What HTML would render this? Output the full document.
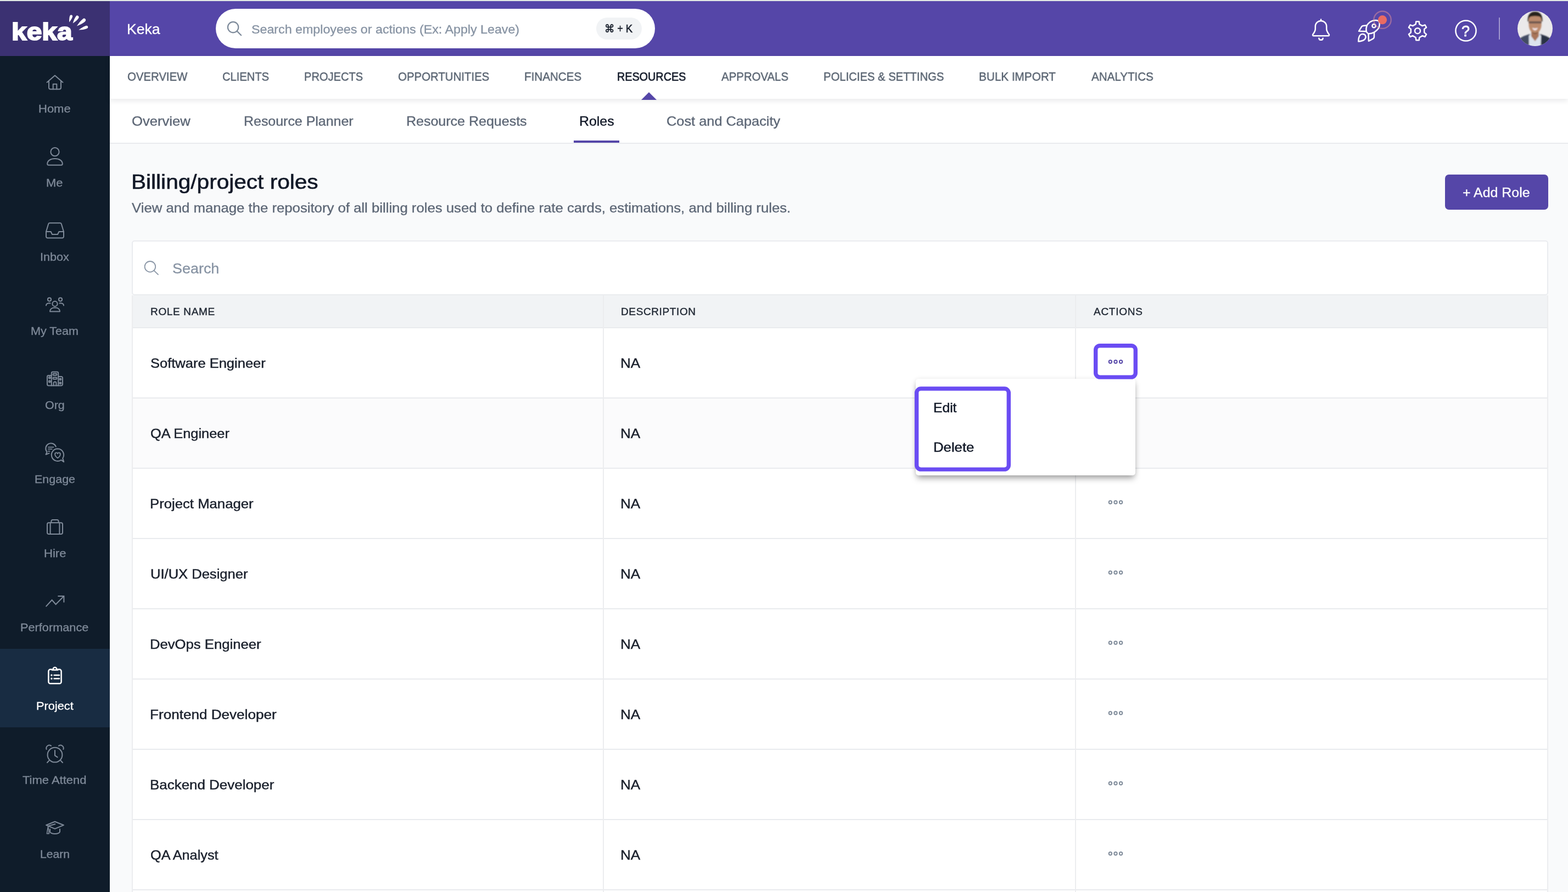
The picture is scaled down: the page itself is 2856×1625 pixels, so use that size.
<!DOCTYPE html>
<html lang="en">
<head>
<meta charset="utf-8">
<title>Keka - Billing/project roles</title>
<style>
html,body{margin:0;padding:0;}
body{width:2856px;height:1625px;overflow:hidden;position:relative;background:#f9fafb;font-family:"Liberation Sans","DejaVu Sans",sans-serif;}
.a{position:absolute;}
.t{position:absolute;white-space:nowrap;line-height:1;will-change:transform;transform-origin:0 0;}
svg{position:absolute;overflow:visible;}
</style>
</head>
<body>
<!-- top strip -->
<div class="a" style="left:0;top:0;width:2856px;height:1px;background:#dde5e2;"></div>
<div class="a" style="left:0;top:1px;width:2856px;height:1px;background:#e8f0e8;"></div>
<!-- logo block + header -->
<div class="a" style="left:0;top:2px;width:200px;height:100px;background:#3b3172;"></div>
<div class="a" style="left:200px;top:2px;width:2656px;height:100px;background:#5546a8;"></div>
<!-- sidebar -->
<div class="a" style="left:0;top:102px;width:200px;height:1523px;background:#0f1c2a;"></div>
<div class="a" style="left:0;top:1182px;width:200px;height:143px;background:#182c42;"></div>
<!-- sub tabs -->
<div class="a" style="left:200px;top:180px;width:2656px;height:80px;background:#fff;border-bottom:2px solid #e9ebee;"></div>
<div class="a" style="left:1045px;top:256px;width:83px;height:4px;background:#5546a8;"></div>
<!-- nav -->
<div class="a" style="left:200px;top:102px;width:2656px;height:78px;background:#fff;box-shadow:0 3px 10px rgba(20,30,40,0.10);"></div>
<svg style="left:1168px;top:168px;" width="28" height="14" viewBox="0 0 28 14"><path d="M0 14 L14 0 L28 14 Z" fill="#5546a8"/></svg>
<!-- header search pill -->
<div class="a" style="left:393px;top:16px;width:800px;height:72px;border-radius:36px;background:#fff;"></div>
<div class="a" style="left:1086px;top:32px;width:83px;height:40px;border-radius:20px;background:#f1f3f5;"></div>
<!-- header right -->
<div class="a" style="left:2730px;top:32px;width:2px;height:40px;background:rgba(255,255,255,0.45);"></div>
<!-- add role -->
<div class="a" style="left:2632px;top:318px;width:188px;height:64px;border-radius:7px;background:#5546a8;"></div>
<!-- search card -->
<div class="a" style="left:240px;top:438px;width:2580px;height:100px;box-sizing:border-box;border:2px solid #eaecef;border-radius:5px;background:#fff;"></div>
<!-- table -->
<div class="a" style="left:240px;top:538px;width:2580px;height:1087px;background:#fff;"></div>
<div class="a" style="left:240px;top:538px;width:2580px;height:58px;background:#f1f3f5;"></div>
<div class="a" style="left:242px;top:726px;width:2576px;height:126px;background:#fbfbfc;"></div>
<!-- row borders -->
<div class="a" style="left:240px;top:596px;width:2580px;height:2px;background:#e9ebee;"></div>
<div class="a" style="left:240px;top:724px;width:2580px;height:2px;background:#e9ebee;"></div>
<div class="a" style="left:240px;top:852px;width:2580px;height:2px;background:#e9ebee;"></div>
<div class="a" style="left:240px;top:980px;width:2580px;height:2px;background:#e9ebee;"></div>
<div class="a" style="left:240px;top:1108px;width:2580px;height:2px;background:#e9ebee;"></div>
<div class="a" style="left:240px;top:1236px;width:2580px;height:2px;background:#e9ebee;"></div>
<div class="a" style="left:240px;top:1364px;width:2580px;height:2px;background:#e9ebee;"></div>
<div class="a" style="left:240px;top:1492px;width:2580px;height:2px;background:#e9ebee;"></div>
<div class="a" style="left:240px;top:1620px;width:2580px;height:2px;background:#e9ebee;"></div>
<!-- vertical borders -->
<div class="a" style="left:240px;top:538px;width:2px;height:1087px;background:#ecedef;"></div>
<div class="a" style="left:1098px;top:538px;width:2px;height:1087px;background:#ecedef;"></div>
<div class="a" style="left:1958px;top:538px;width:2px;height:1087px;background:#ecedef;"></div>
<div class="a" style="left:2818px;top:538px;width:2px;height:1087px;background:#ecedef;"></div>
<!-- action button highlight -->
<!-- dropdown -->
<div class="a" style="left:1668px;top:690px;width:400px;height:176px;background:#fff;border-radius:5px;box-shadow:0 7px 12px -2px rgba(0,0,0,0.36),0 0 9px rgba(0,0,0,0.07);"></div>
<svg style="left:0;top:0;" width="2856" height="1625" viewBox="0 0 2856 1625" fill="none" stroke-linecap="round" stroke-linejoin="round">
<path transform="translate(126.1 40.6) rotate(-72.1)" d="M0 0 C4.19 -1.50 7.69 -2.50 11.18 -2.50 C13.28 -2.50 13.98 -1.38 13.98 0 C13.98 1.38 13.28 2.50 11.18 2.50 C7.69 2.50 4.19 1.50 0 0 Z" fill="#fff"/>
<path transform="translate(132.7 42.4) rotate(-54.1)" d="M0 0 C4.96 -1.74 9.10 -2.90 13.23 -2.90 C15.72 -2.90 16.54 -1.59 16.54 0 C16.54 1.59 15.72 2.90 13.23 2.90 C9.10 2.90 4.96 1.74 0 0 Z" fill="#fff"/>
<path transform="translate(139.8 47.6) rotate(-39.4)" d="M0 0 C6.10 -1.86 11.18 -3.10 16.26 -3.10 C19.30 -3.10 20.32 -1.71 20.32 0 C20.32 1.71 19.30 3.10 16.26 3.10 C11.18 3.10 6.10 1.86 0 0 Z" fill="#fff"/>
<path transform="translate(143.3 54.6) rotate(-20.0)" d="M0 0 C5.36 -1.62 9.83 -2.70 14.30 -2.70 C16.98 -2.70 17.87 -1.49 17.87 0 C17.87 1.49 16.98 2.70 14.30 2.70 C9.83 2.70 5.36 1.62 0 0 Z" fill="#fff"/>
<g stroke="#7f8a99" stroke-width="2">
<path d="M85.6 150 L100 137.6 L114.4 150"/><path d="M89 147.3 V159.6 a3 3 0 0 0 3 3 H108 a3 3 0 0 0 3 -3 V147.3"/><path d="M96.7 162.4 V153.2 H103.3 V162.4"/>
<circle cx="100" cy="276.7" r="7.6"/><path d="M86.2 298.6 C86.2 292.6 92 289 100 289 S113.8 292.6 113.8 298.6 Q113.8 300.7 111.8 300.7 H88.2 Q86.2 300.7 86.2 298.6 Z"/>
<path d="M84 422 L88.2 408 Q88.8 406.3 90.6 406.3 H109.4 Q111.2 406.3 111.8 408 L116 422 V431 a2.5 2.5 0 0 1 -2.5 2.5 H86.5 a2.5 2.5 0 0 1 -2.5 -2.5 Z"/><path d="M84 422 H92.6 L95 427 H105 L107.4 422 H116"/>
<circle cx="100" cy="553.4" r="4.6"/><path d="M91 567.4 C91 563.2 94.6 560.6 100 560.6 S109 563.2 109 567.4 Z"/>
<circle cx="90" cy="545.6" r="3.1"/><circle cx="110" cy="545.6" r="3.1"/>
<path d="M84 556.4 C84 553.6 86.6 552 91.6 552.4"/><path d="M116 556.4 C116 553.6 113.4 552 108.4 552.4"/>
<path d="M93.8 702.4 V680 a2.4 2.4 0 0 1 2.4 -2.4 H103.8 a2.4 2.4 0 0 1 2.4 2.4 V702.4"/>
<path d="M93.8 684 H88.4 a2.4 2.4 0 0 0 -2.4 2.4 V700 a2.4 2.4 0 0 0 2.4 2.4 H111.6 a2.4 2.4 0 0 0 2.4 -2.4 V688.4 a2.4 2.4 0 0 0 -2.4 -2.4 H106.2"/>
<rect x="96.6" y="680.4" width="6.8" height="3.4" rx="1"/><rect x="96.6" y="687.4" width="6.8" height="3.4" rx="1"/>
<rect x="89" y="686.6" width="2.8" height="2.8" rx=".6"/><rect x="89" y="693.6" width="2.8" height="2.8" rx=".6"/><rect x="108.4" y="689.4" width="2.8" height="2.8" rx=".6"/><rect x="108.4" y="696.4" width="2.8" height="2.8" rx=".6"/>
<path d="M97.6 702.4 V698 a2.4 2.4 0 0 1 4.8 0 V702.4"/>
<path d="M101.8 813.6 A9.6 9.6 0 1 0 85.6 823.4 L83.6 828 L89.6 825.6"/>
<path d="M88 814.6 H97.4 M88 818.2 H94.6 M88 821.8 H90.6" stroke-width="1.8"/>
<path d="M105 817.6 A11.2 11.2 0 1 0 111.4 838 L116.2 841.4 L114.2 835 A11.2 11.2 0 0 0 105 817.6 Z"/>
<path d="M105 834.4 C101.4 832 100.2 829.6 100.2 827.8 A2.4 2.4 0 0 1 105 826.6 A2.4 2.4 0 0 1 109.8 827.8 C109.8 829.6 108.6 832 105 834.4 Z" stroke-width="1.8"/>
<rect x="86" y="952.2" width="28" height="20.8" rx="3"/><path d="M93.4 952 V949.4 a2.4 2.4 0 0 1 2.4 -2.4 H104.2 a2.4 2.4 0 0 1 2.4 2.4 V952"/><path d="M91.6 952.4 V972.8 M108.4 952.4 V972.8"/>
<path d="M84.2 1104.4 L94.6 1093 L101.6 1101 L116 1086.4" stroke-linejoin="miter"/><path d="M105.4 1086 H116.4 V1097.4" stroke-linejoin="miter" stroke-linecap="butt"/>
<circle cx="100" cy="1375.2" r="13.4"/><path d="M100 1367 V1376.4 L104.6 1379.4"/>
<path d="M84.6 1365 A5.6 5.6 0 0 1 93 1358.6"/><path d="M115.4 1365 A5.6 5.6 0 0 0 107 1358.6"/>
<path d="M89.6 1385.4 L86 1389.2 M110.4 1385.4 L114 1389.2"/>
<path d="M100 1496.8 L116 1503.2 L100 1509.8 L84 1503.2 Z"/><path d="M88.4 1504.6 L100.4 1501.2"/><path d="M87.6 1505.4 L85.4 1518.6 H89.4 Z" stroke-width="1.6"/>
<path d="M91 1510.6 V1515 C91 1517.2 95 1519 100 1519 S109 1517.2 109 1515 V1510.6"/>
</g>
<g stroke="#fff" stroke-width="2.5">
<path d="M94.6 1219.6 H91.6 a3.2 3.2 0 0 0 -3.2 3.2 V1242 a3.2 3.2 0 0 0 3.2 3.2 H108.4 a3.2 3.2 0 0 0 3.2 -3.2 V1222.800 a3.2 3.2 0 0 0 -3.2 -3.2 H105.4"/>
<path d="M94.8 1220.6 H105.2"/><path d="M96.8 1219.8 A3.3 3.3 0 1 1 103.2 1219.8"/>
<path d="M98.6 1230 H108 M98.6 1236.2 H108"/><path d="M93.9 1230 h0.01 M93.9 1236.2 h0.01" stroke-width="3.4"/>
</g>
<g stroke="#7d8a9a" stroke-width="2.2"><circle cx="424.6" cy="49.6" r="9.7"/><path d="M431.6 56.6 L439.2 64.2"/></g>
<g stroke="#8a96a6" stroke-width="1.8"><circle cx="273.4" cy="485.8" r="9.8"/><path d="M280.4 492.8 L288 500.2"/></g>
<g stroke="#fff" stroke-width="2.5">
<path d="M2406 34.4 V37.9" stroke-linecap="butt"/>
<path d="M2395.8 52.5 V48.1 A10.2 10.2 0 0 1 2416.2 48.1 V52.5 C2416.2 57 2418.5 59.5 2420.6 62.4 C2421.6 63.8 2420.8 65.2 2419.2 65.2 H2392.8 C2391.2 65.2 2390.4 63.8 2391.4 62.4 C2393.5 59.5 2395.8 57 2395.8 52.5 Z"/>
<path d="M2402.3 69.7 A3.75 3.75 0 0 0 2409.7 69.7"/>
<path d="M2489.8 46.1 C2491.5 43.5 2493 42 2495.2 40.3 C2498.5 37.9 2503 36.7 2506.4 37 C2509 37.2 2510.5 37.6 2511.2 38.6 C2512.4 40 2512.9 41.2 2512.7 42.6 C2512.7 45 2512.5 47.5 2511.8 49.5 C2510.7 52 2509.6 53.4 2508.3 54.5 C2506.5 56.2 2505 57.6 2502.9 58.8 C2500 60.4 2496 61.4 2492.5 61.5 C2490.5 60.5 2489.2 59 2488.7 57.2 C2488 54 2488.6 49.5 2489.8 46.1 Z"/>
<circle cx="2502.5" cy="47.2" r="3.1"/>
<path d="M2489.8 46.2 L2482.6 47.1 Q2480.8 47.4 2479.9 48.9 L2475 56.8 L2488.6 57.3"/>
<path d="M2492.5 61.6 L2492.9 74.8 L2500.8 70.6 Q2502.8 69.5 2502.9 67.4 L2503 59"/>
<path d="M2474.3 75.4 C2474.3 71 2475 66.5 2477.5 63.8 C2479 62.3 2480.6 61.9 2482.2 62 C2484.8 62.2 2486.4 63.4 2487 64.9 C2487.6 66.2 2487.7 67.2 2487.500 68.4 C2487 70.2 2486 71.6 2484.5 72.6 C2482 74.3 2478.6 75.2 2474.3 75.4 Z"/>
<path d="M2578.6 44.1 L2579.3 39.2 L2584.7 39.2 L2585.4 44.1 L2590.8 47.2 L2595.4 45.4 L2598.1 50.0 L2594.2 53.1 L2594.2 59.3 L2598.1 62.4 L2595.4 67.0 L2590.8 65.2 L2585.4 68.3 L2584.7 73.2 L2579.3 73.2 L2578.6 68.3 L2573.2 65.2 L2568.6 67.0 L2565.9 62.4 L2569.8 59.3 L2569.8 53.1 L2565.9 50.0 L2568.6 45.4 L2573.2 47.2 Z" stroke-linejoin="round"/>
<circle cx="2582" cy="56.2" r="5"/>
<circle cx="2670" cy="56" r="18.6"/>
</g>
<circle cx="2518" cy="36.2" r="15.7" stroke="rgba(240,150,150,0.46)" stroke-width="2.3"/><circle cx="2518" cy="36.2" r="8.1" fill="#e96b63"/>
<rect x="1995.70" y="629.70" width="72.60" height="57.40" rx="7.80" stroke="#6a4cf3" stroke-width="7.4"/>
<rect x="1669.60" y="708.00" width="167.70" height="147.10" rx="7.80" stroke="#6a4cf3" stroke-width="7.4"/>
<g stroke="#5546a8" stroke-width="1.9"><circle cx="2022.4" cy="659" r="2.7"/><circle cx="2032" cy="659" r="2.7"/><circle cx="2041.600" cy="659" r="2.7"/></g>
<g stroke="#7e8a99" stroke-width="1.9"><circle cx="2022.4" cy="915" r="2.7"/><circle cx="2032" cy="915" r="2.7"/><circle cx="2041.600" cy="915" r="2.7"/></g>
<g stroke="#7e8a99" stroke-width="1.9"><circle cx="2022.4" cy="1043" r="2.7"/><circle cx="2032" cy="1043" r="2.7"/><circle cx="2041.600" cy="1043" r="2.7"/></g>
<g stroke="#7e8a99" stroke-width="1.9"><circle cx="2022.4" cy="1171" r="2.7"/><circle cx="2032" cy="1171" r="2.7"/><circle cx="2041.600" cy="1171" r="2.7"/></g>
<g stroke="#7e8a99" stroke-width="1.9"><circle cx="2022.4" cy="1299" r="2.7"/><circle cx="2032" cy="1299" r="2.7"/><circle cx="2041.600" cy="1299" r="2.7"/></g>
<g stroke="#7e8a99" stroke-width="1.9"><circle cx="2022.4" cy="1427" r="2.7"/><circle cx="2032" cy="1427" r="2.7"/><circle cx="2041.600" cy="1427" r="2.7"/></g>
<g stroke="#7e8a99" stroke-width="1.9"><circle cx="2022.4" cy="1555" r="2.7"/><circle cx="2032" cy="1555" r="2.7"/><circle cx="2041.600" cy="1555" r="2.7"/></g>
</svg>
<svg style="left:2764px;top:20px;" width="64" height="64" viewBox="0 0 64 64">
<defs><clipPath id="avc"><circle cx="32" cy="32" r="32"/></clipPath><filter id="avb" x="-10%" y="-10%" width="120%" height="120%"><feGaussianBlur stdDeviation="0.9"/></filter></defs>
<g clip-path="url(#avc)"><rect width="64" height="64" fill="#ebe9ea"/>
<g filter="url(#avb)">
<path d="M0 64 L4 50 Q12 45 21 42.500 L43 42.500 Q52 45 60 50 L64 64 Z" fill="#2c3145"/>
<path d="M4 50 Q12 45 21 42.500 L21 64 L0 64 Z" fill="#434b63"/>
<path d="M20.600 45 L25.500 41 L38.500 41 L43 45 L42.500 64 L21 64 Z" fill="#dde3ee"/>
<path d="M25.200 38 L38.600 38 L38.800 46 L32 55 L25 46 Z" fill="#a9755a"/>
<path d="M20.400 13 Q20.400 6 32 6 Q43.800 6 43.800 13 L43.600 27 Q42.500 36 36 40 Q32 42 28 40 Q21.500 36 20.600 27 Z" fill="#bd8b6d"/>
<path d="M26 37.500 Q32 42.500 38 37.500 Q36 41.500 32 41.800 Q28 41.500 26 37.500 Z" fill="#6e4a3a"/>
<path d="M18.600 19 Q17.800 1.500 32 1.200 Q46.200 1.500 45.400 19 L43.800 19 Q44 11.500 40 10.200 Q32 8.200 24 10.200 Q20 11.500 20.200 19 Z" fill="#27211f"/>
<rect x="20.300" y="18.800" width="23.600" height="4" rx="1.800" fill="#5c4c48" opacity="0.8"/>
<path d="M26.800 30.600 Q32 32.600 37 30.600 Q35.500 35.400 32 35.400 Q28.300 35.400 26.800 30.600 Z" fill="#f1e4e6"/>
</g></g></svg>
<span class="t" style="left:230.6px;top:40.00px;font-size:26px;color:#ffffff;transform:scaleX(1.0225);-webkit-text-stroke-width:0.3px;">Keka</span>
<span class="t" style="left:457.5px;top:43.00px;font-size:21.2px;color:#8793a3;transform:scaleX(1.0964);-webkit-text-stroke-width:0.3px;">Search employees or actions (Ex: Apply Leave)</span>
<span class="t" style="left:1101.3px;top:43.00px;font-size:19.8px;color:#0f1623;transform:scaleX(0.9208);-webkit-text-stroke-width:0.5px;">⌘ + K</span>
<span class="t" style="left:2662.2px;top:44.00px;font-size:27px;color:#ffffff;transform:scaleX(0.9714);-webkit-text-stroke-width:0.8px;">?</span>
<span class="t" style="left:21.4px;top:36.00px;font-size:44.5px;color:#ffffff;font-weight:700;transform:scaleX(1.1168);-webkit-text-stroke-width:2.0px;">keka</span>
<span class="t" style="left:231.6px;top:129.00px;font-size:21.2px;color:#56616f;transform:scaleX(0.9609);-webkit-text-stroke-width:0.4px;">OVERVIEW</span>
<span class="t" style="left:405.0px;top:129.00px;font-size:21.2px;color:#56616f;transform:scaleX(0.9508);-webkit-text-stroke-width:0.4px;">CLIENTS</span>
<span class="t" style="left:554.1px;top:129.00px;font-size:21.2px;color:#56616f;transform:scaleX(0.9465);-webkit-text-stroke-width:0.4px;">PROJECTS</span>
<span class="t" style="left:724.9px;top:129.00px;font-size:21.2px;color:#56616f;transform:scaleX(0.9625);-webkit-text-stroke-width:0.4px;">OPPORTUNITIES</span>
<span class="t" style="left:955.3px;top:129.00px;font-size:21.2px;color:#56616f;transform:scaleX(0.9727);-webkit-text-stroke-width:0.4px;">FINANCES</span>
<span class="t" style="left:1314.3px;top:129.00px;font-size:21.2px;color:#56616f;transform:scaleX(0.9625);-webkit-text-stroke-width:0.4px;">APPROVALS</span>
<span class="t" style="left:1500.1px;top:129.00px;font-size:21.2px;color:#56616f;transform:scaleX(0.9551);-webkit-text-stroke-width:0.4px;">POLICIES &amp; SETTINGS</span>
<span class="t" style="left:1783.0px;top:129.00px;font-size:21.2px;color:#56616f;transform:scaleX(0.9768);-webkit-text-stroke-width:0.4px;">BULK IMPORT</span>
<span class="t" style="left:1987.7px;top:129.00px;font-size:21.2px;color:#56616f;transform:scaleX(0.9712);-webkit-text-stroke-width:0.4px;">ANALYTICS</span>
<span class="t" style="left:1123.7px;top:129.00px;font-size:21.2px;color:#111827;transform:scaleX(0.9340);-webkit-text-stroke-width:0.65px;">RESOURCES</span>
<span class="t" style="left:239.9px;top:210.00px;font-size:23.6px;color:#5d6776;transform:scaleX(1.0856);-webkit-text-stroke-width:0.35px;">Overview</span>
<span class="t" style="left:443.9px;top:210.00px;font-size:23.6px;color:#5d6776;transform:scaleX(1.0569);-webkit-text-stroke-width:0.35px;">Resource Planner</span>
<span class="t" style="left:739.9px;top:210.00px;font-size:23.6px;color:#5d6776;transform:scaleX(1.0598);-webkit-text-stroke-width:0.35px;">Resource Requests</span>
<span class="t" style="left:1054.8px;top:210.00px;font-size:23.6px;color:#111827;transform:scaleX(1.0543);-webkit-text-stroke-width:0.4px;">Roles</span>
<span class="t" style="left:1213.6px;top:210.00px;font-size:23.6px;color:#5d6776;transform:scaleX(1.0746);-webkit-text-stroke-width:0.35px;">Cost and Capacity</span>
<span class="t" style="left:239.2px;top:313.00px;font-size:37.2px;color:#111827;transform:scaleX(1.0914);-webkit-text-stroke-width:0.6px;">Billing/project roles</span>
<span class="t" style="left:240.2px;top:367.00px;font-size:24.6px;color:#5d6776;transform:scaleX(1.0456);-webkit-text-stroke-width:0.35px;">View and manage the repository of all billing roles used to define rate cards, estimations, and billing rules.</span>
<span class="t" style="left:2663.7px;top:339.00px;font-size:24.4px;color:#ffffff;transform:scaleX(1.0209);-webkit-text-stroke-width:0.3px;">+ Add Role</span>
<span class="t" style="left:313.7px;top:476.00px;font-size:26.6px;color:#8793a3;transform:scaleX(1.0125);-webkit-text-stroke-width:0.3px;">Search</span>
<span class="t" style="left:273.5px;top:558.00px;font-size:19.0px;color:#1f2733;letter-spacing:0.66px;-webkit-text-stroke-width:0.4px;">ROLE NAME</span>
<span class="t" style="left:1130.7px;top:558.00px;font-size:19.0px;color:#1f2733;letter-spacing:0.62px;-webkit-text-stroke-width:0.4px;">DESCRIPTION</span>
<span class="t" style="left:1992.4px;top:558.00px;font-size:19.0px;color:#1f2733;letter-spacing:0.74px;-webkit-text-stroke-width:0.4px;">ACTIONS</span>
<span class="t" style="left:273.7px;top:650.00px;font-size:24.6px;color:#1a202c;transform:scaleX(1.0366);-webkit-text-stroke-width:0.45px;">Software Engineer</span>
<span class="t" style="left:1130.1px;top:650.00px;font-size:24.6px;color:#1a202c;transform:scaleX(1.0622);-webkit-text-stroke-width:0.45px;">NA</span>
<span class="t" style="left:273.7px;top:778.00px;font-size:24.6px;color:#1a202c;transform:scaleX(1.0313);-webkit-text-stroke-width:0.45px;">QA Engineer</span>
<span class="t" style="left:1130.1px;top:778.00px;font-size:24.6px;color:#1a202c;transform:scaleX(1.0622);-webkit-text-stroke-width:0.45px;">NA</span>
<span class="t" style="left:272.6px;top:906.00px;font-size:24.6px;color:#1a202c;transform:scaleX(1.0451);-webkit-text-stroke-width:0.45px;">Project Manager</span>
<span class="t" style="left:1130.1px;top:906.00px;font-size:24.6px;color:#1a202c;transform:scaleX(1.0622);-webkit-text-stroke-width:0.45px;">NA</span>
<span class="t" style="left:273.7px;top:1034.00px;font-size:24.6px;color:#1a202c;transform:scaleX(1.0386);-webkit-text-stroke-width:0.45px;">UI/UX Designer</span>
<span class="t" style="left:1130.1px;top:1034.00px;font-size:24.6px;color:#1a202c;transform:scaleX(1.0622);-webkit-text-stroke-width:0.45px;">NA</span>
<span class="t" style="left:272.6px;top:1162.00px;font-size:24.6px;color:#1a202c;transform:scaleX(1.0431);-webkit-text-stroke-width:0.45px;">DevOps Engineer</span>
<span class="t" style="left:1130.1px;top:1162.00px;font-size:24.6px;color:#1a202c;transform:scaleX(1.0622);-webkit-text-stroke-width:0.45px;">NA</span>
<span class="t" style="left:272.6px;top:1290.00px;font-size:24.6px;color:#1a202c;transform:scaleX(1.0610);-webkit-text-stroke-width:0.45px;">Frontend Developer</span>
<span class="t" style="left:1130.1px;top:1290.00px;font-size:24.6px;color:#1a202c;transform:scaleX(1.0622);-webkit-text-stroke-width:0.45px;">NA</span>
<span class="t" style="left:272.6px;top:1418.00px;font-size:24.6px;color:#1a202c;transform:scaleX(1.0544);-webkit-text-stroke-width:0.45px;">Backend Developer</span>
<span class="t" style="left:1130.1px;top:1418.00px;font-size:24.6px;color:#1a202c;transform:scaleX(1.0622);-webkit-text-stroke-width:0.45px;">NA</span>
<span class="t" style="left:273.7px;top:1546.00px;font-size:24.6px;color:#1a202c;transform:scaleX(1.0271);-webkit-text-stroke-width:0.45px;">QA Analyst</span>
<span class="t" style="left:1130.1px;top:1546.00px;font-size:24.6px;color:#1a202c;transform:scaleX(1.0622);-webkit-text-stroke-width:0.45px;">NA</span>
<span class="t" style="left:1700.0px;top:731.00px;font-size:23.9px;color:#111827;transform:scaleX(1.0313);-webkit-text-stroke-width:0.45px;">Edit</span>
<span class="t" style="left:1699.9px;top:803.00px;font-size:23.9px;color:#111827;transform:scaleX(1.0771);-webkit-text-stroke-width:0.45px;">Delete</span>
<span class="t" style="left:70.2px;top:188.00px;font-size:20.4px;color:#7f8a99;transform:scaleX(1.0782);-webkit-text-stroke-width:0.3px;">Home</span>
<span class="t" style="left:84.4px;top:323.00px;font-size:20.4px;color:#7f8a99;transform:scaleX(1.0746);-webkit-text-stroke-width:0.3px;">Me</span>
<span class="t" style="left:73.3px;top:458.00px;font-size:20.4px;color:#7f8a99;transform:scaleX(1.0599);-webkit-text-stroke-width:0.3px;">Inbox</span>
<span class="t" style="left:56.3px;top:593.00px;font-size:20.4px;color:#7f8a99;transform:scaleX(1.0555);-webkit-text-stroke-width:0.3px;">My Team</span>
<span class="t" style="left:82.3px;top:728.00px;font-size:20.4px;color:#7f8a99;transform:scaleX(1.0520);-webkit-text-stroke-width:0.3px;">Org</span>
<span class="t" style="left:62.6px;top:863.00px;font-size:20.4px;color:#7f8a99;transform:scaleX(1.0528);-webkit-text-stroke-width:0.3px;">Engage</span>
<span class="t" style="left:79.5px;top:998.00px;font-size:20.4px;color:#7f8a99;transform:scaleX(1.0820);-webkit-text-stroke-width:0.3px;">Hire</span>
<span class="t" style="left:37.1px;top:1133.00px;font-size:20.4px;color:#7f8a99;transform:scaleX(1.0651);-webkit-text-stroke-width:0.3px;">Performance</span>
<span class="t" style="left:41.2px;top:1411.00px;font-size:20.4px;color:#7f8a99;transform:scaleX(1.0778);-webkit-text-stroke-width:0.3px;">Time Attend</span>
<span class="t" style="left:72.6px;top:1546.00px;font-size:20.4px;color:#7f8a99;transform:scaleX(1.0372);-webkit-text-stroke-width:0.3px;">Learn</span>
<span class="t" style="left:65.8px;top:1276.00px;font-size:20.4px;color:#ffffff;transform:scaleX(1.0669);-webkit-text-stroke-width:0.3px;">Project</span>
</body>
</html>
